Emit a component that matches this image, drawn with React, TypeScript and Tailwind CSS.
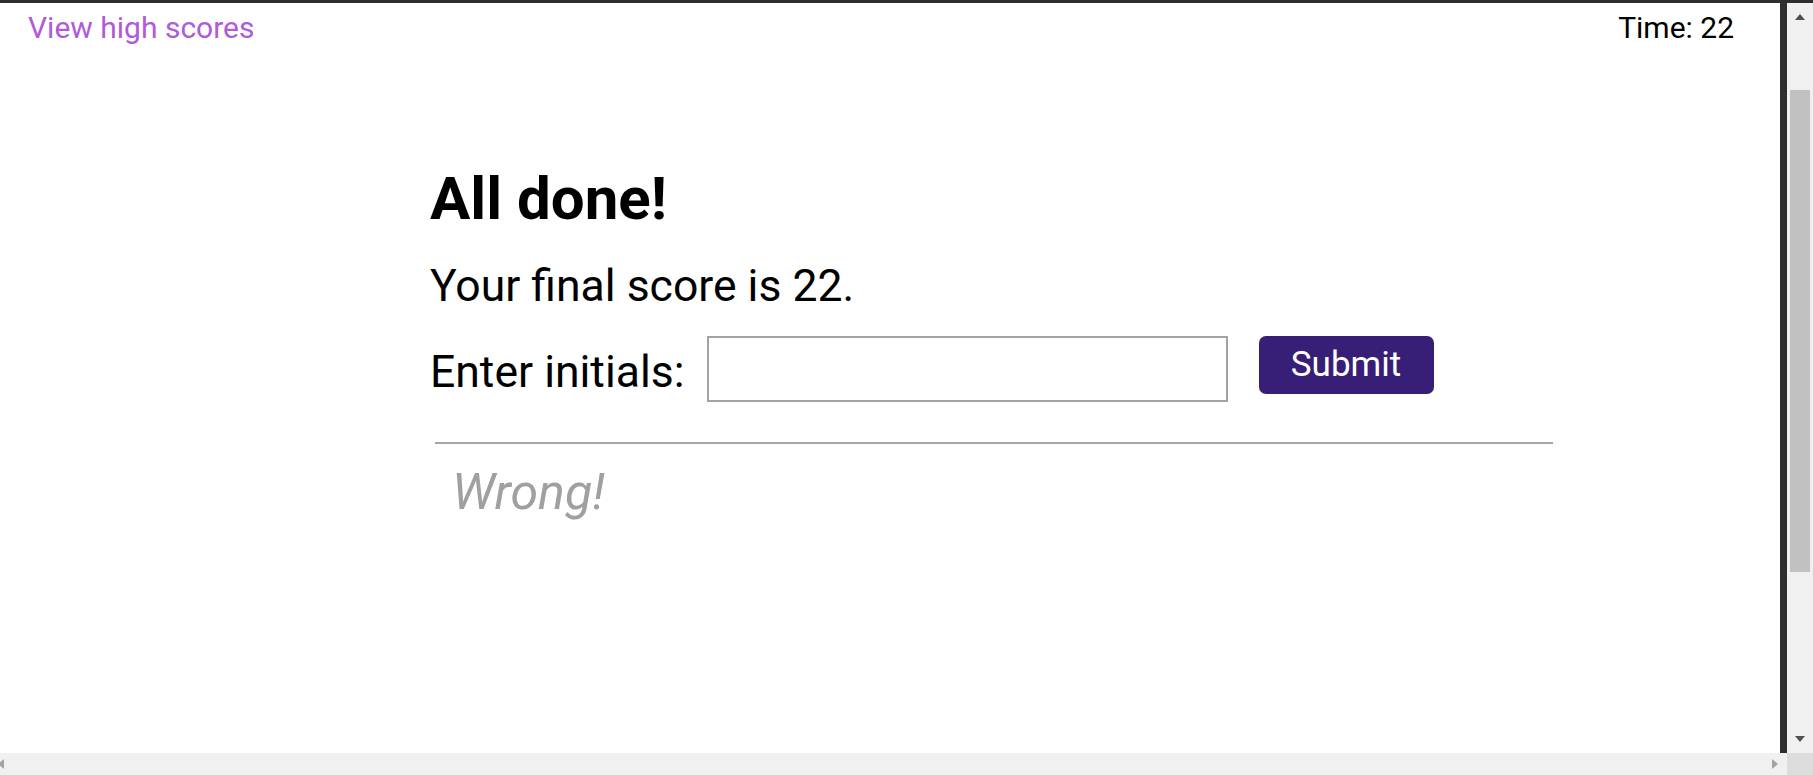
import React from 'react'

const Arrow: React.FC<{ dir: 'up' | 'down' | 'left' | 'right'; color: string }> = ({ dir, color }) => {
  const pts = {
    up: '0,6 5,0 10,6',
    down: '0,0 10,0 5,6',
    left: '6,0 6,10 0,5',
    right: '0,0 6,5 0,10',
  }[dir]
  const vertical = dir === 'up' || dir === 'down'
  return (
    <svg width={vertical ? 10 : 6} height={vertical ? 6 : 10} viewBox={vertical ? '0 0 10 6' : '0 0 6 10'}>
      <polygon points={pts} fill={color} />
    </svg>
  )
}

const QuizEnd: React.FC = () => (
  <div className="flex-1 bg-white font-['Roboto','Liberation_Sans',sans-serif] text-black">
    <header className="flex justify-between pt-[10px] pl-[28px] pr-[46px] text-[30px] leading-none">
      <a className="text-[#b05bd8] cursor-pointer">View high scores</a>
      <span>Time: 22</span>
    </header>

    <section className="ml-[430px] w-[1123px]">
      <h1 className="mt-[126px] text-[60px] font-bold leading-none">All done!</h1>
      <p className="mt-[35px] text-[44.5px] leading-none">Your final score is 22.</p>

      <form className="mt-[27px] flex items-start" onSubmit={(e) => e.preventDefault()}>
        <label className="mt-[14px] mr-[22px] text-[44.5px] leading-none">Enter initials:</label>
        <input
          type="text"
          className="h-[66px] w-[521px] border-2 border-[#a3a3a3] bg-white px-3 text-[36px] outline-none"
        />
        <button
          type="submit"
          className="ml-[31px] flex h-[58px] w-[175px] items-center justify-center rounded-[7px] bg-[#371e77] text-[35px] leading-none text-white"
        >
          Submit
        </button>
      </form>

      <hr className="mt-[40px] ml-[5px] w-[1118px] border-0 border-t-2 border-[#a6a6a6]" />
      <p className="mt-[23px] ml-[22px] text-[50px] italic leading-none text-[#a0a0a0]">Wrong!</p>
    </section>
  </div>
)

export default function App() {
  return (
    <div className="flex h-[775px] w-full flex-col overflow-hidden bg-white">
      <div className="h-[3px] bg-[#2e2e2e]" />
      <div className="flex flex-1">
        <QuizEnd />
        <div className="w-[7px] bg-[#2e2e2e]" />
        <div className="flex w-[26px] flex-col items-center bg-[#f0f0f0]">
          <div className="mt-[11px]">
            <Arrow dir="up" color="#505050" />
          </div>
          <div className="mt-[70px] h-[482px] w-[20px] bg-[#c1c1c1]" />
          <div className="flex-1" />
          <div className="mb-[11px]">
            <Arrow dir="down" color="#505050" />
          </div>
        </div>
      </div>
      <div className="flex h-[22px]">
        <div className="flex flex-1 items-center justify-between bg-[#f0f0f0] pr-[9px]">
          <div className="-ml-[2px]">
            <Arrow dir="left" color="#a3a3a3" />
          </div>
          <Arrow dir="right" color="#a3a3a3" />
        </div>
        <div className="w-[26px] bg-[#dcdcdc]" />
      </div>
    </div>
  )
}
